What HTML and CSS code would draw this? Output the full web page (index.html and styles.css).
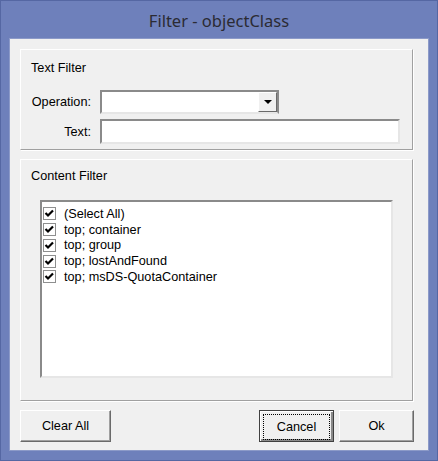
FILE: index.html
```html
<!DOCTYPE html>
<html lang="en">
<head>
    <meta charset="UTF-8">
    <title>Filter - objectClass</title>
    <link rel="stylesheet" href="styles.css">
</head>
<body>
<div class="window">
    <div class="titlebar">Filter - objectClass</div>

    <div class="client">
        <div class="group text-group">
            <div class="group-title">Text Filter</div>
            <div class="form-grid">
                <label class="field-label">Operation:</label>
                <div class="combo">
                    <div class="combo-value"></div>
                    <div class="combo-btn"><span class="arrow"></span></div>
                </div>

                <label class="field-label">Text:</label>
                <input type="text" class="text-input">
            </div>
        </div>

        <div class="group content-group">
            <div class="group-title">Content Filter</div>
            <div class="listbox">
                <div class="list-item"><span class="check"></span>(Select All)</div>
                <div class="list-item"><span class="check"></span>top; container</div>
                <div class="list-item"><span class="check"></span>top; group</div>
                <div class="list-item"><span class="check"></span>top; lostAndFound</div>
                <div class="list-item"><span class="check"></span>top; msDS-QuotaContainer</div>
            </div>
        </div>

        <div class="button-row">
            <button class="btn btn-wide">Clear All</button>
            <div class="button-group">
                <button class="btn btn-default"><span class="focus">Cancel</span></button>
                <button class="btn">Ok</button>
            </div>
        </div>
    </div>
</div>

<script>
    // draw the check marks
    const checkSvg = '<svg width="13" height="13" viewBox="0 0 13 13"><polyline points="2.5,6 5,8.5 10,3.5" fill="none" stroke="#000" stroke-width="2.2"/></svg>';
    for (let box of document.querySelectorAll(".check")) {
        box.innerHTML = checkSvg;
    }
</script>
</body>
</html>
```

FILE: styles.css
```css
body {
    margin: 0;
    padding: 0;
    background: #6e80bb;
    font-family: "Liberation Sans", Arial, sans-serif;
    font-size: 12.7px;
    color: #000;
}

.window {
    width: 438px;
    height: 461px;
    box-sizing: border-box;
    border: 1px solid #5567a3;
    background: #6e80bb;
    padding: 0 8px 9px 8px;
    display: flex;
    flex-direction: column;
}

.titlebar {
    height: 37px;
    line-height: 39px;
    text-align: center;
    font-family: "Noto Sans", "Open Sans", sans-serif;
    font-size: 16.5px;
    color: #2b2b33;
    flex-shrink: 0;
}

.client {
    flex: 1;
    background: #f0f0f0;
    border: 1px solid #8c9ac8;
    padding: 10px 15px 0 10px;
    display: flex;
    flex-direction: column;
}

.group {
    border: 1px solid;
    border-color: #fff #a0a0a0 #a0a0a0 #fff;
    box-shadow: 1px 1px 0 #fff;
}

.group-title {
    line-height: 14px;
    padding-left: 10px;
}

.text-group {
    height: 101px;
    box-sizing: border-box;
    padding-top: 11px;
}

.form-grid {
    display: grid;
    grid-template-columns: 70px 300px;
    column-gap: 9px;
    row-gap: 5px;
    margin-top: 15px;
}

.field-label {
    text-align: right;
    align-self: center;
}

.combo {
    width: 179px;
    height: 24px;
    box-sizing: border-box;
    display: flex;
    border: 2px solid;
    border-color: #8a8a8a #8a8a8a #e6e6e6 #8a8a8a;
    background: #fff;
}

.combo-value {
    flex: 1;
}

.combo-btn {
    width: 19px;
    box-sizing: border-box;
    border: 1px solid;
    border-color: #fff #6a6a6a #6a6a6a #fff;
    background: #f0f0f0;
    display: flex;
    align-items: center;
    justify-content: center;
}

.arrow {
    width: 0;
    height: 0;
    border-left: 4px solid transparent;
    border-right: 4px solid transparent;
    border-top: 4px solid #000;
}

.text-input {
    width: 300px;
    height: 25px;
    box-sizing: border-box;
    margin: 0;
    border: 2px solid;
    border-color: #8a8a8a #e6e6e6 #e6e6e6 #8a8a8a;
    background: #fff;
    padding: 0 3px;
    font: inherit;
    outline: none;
}

.content-group {
    margin-top: 9px;
    height: 242px;
    box-sizing: border-box;
    padding: 9px 19px 0 19px;
}

.content-group .group-title {
    margin-left: -19px;
}

.listbox {
    margin-top: 17px;
    height: 178px;
    box-sizing: border-box;
    border: 2px solid;
    border-color: #8a8a8a #e6e6e6 #e6e6e6 #8a8a8a;
    background: #fff;
    padding: 4px 1px 0 1px;
}

.list-item {
    height: 15.75px;
    display: flex;
    align-items: center;
    gap: 8px;
    white-space: nowrap;
}

.check {
    width: 13px;
    height: 13px;
    box-sizing: border-box;
    border: 1px solid #8e8f8f;
    background: #fff;
    display: flex;
    align-items: center;
    justify-content: center;
}

.check svg {
    display: block;
    flex-shrink: 0;
}

.button-row {
    margin-top: 9px;
    margin-right: -1px;
    display: flex;
    justify-content: space-between;
}

.button-group {
    display: flex;
    gap: 5px;
}

.btn {
    width: 75px;
    height: 32px;
    box-sizing: border-box;
    border: 1px solid;
    border-color: #fff #6a6a6a #6a6a6a #fff;
    box-shadow: inset -1px -1px 0 #a0a0a0;
    background: #f0f0f0;
    font: inherit;
    color: #000;
    padding: 0;
}

.btn-wide {
    width: 91px;
}

.btn-default {
    border-color: #404040;
    box-shadow: inset 1px 1px 0 #fff, inset -2px -2px 0 #8a8a8a;
}

.focus {
    display: flex;
    align-items: center;
    justify-content: center;
    margin: 3px;
    height: 24px;
    border: 1px dotted #000;
}
```
